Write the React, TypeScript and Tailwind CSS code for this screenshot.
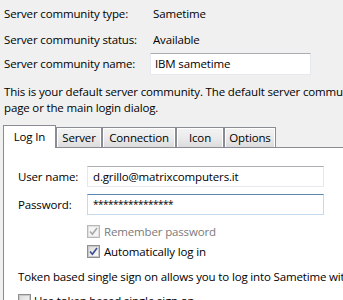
function Checkbox({ checked, disabled }: { checked?: boolean; disabled?: boolean }) {
  return (
    <div
      className={`flex h-[13px] w-[13px] shrink-0 items-center justify-center border ${
        disabled ? "border-[#b8b8b8]" : "border-[#8e8f8f]"
      } bg-white`}
    >
      <div
        className={`flex h-[11px] w-[11px] items-center justify-center border ${
          disabled ? "border-[#e0e0e0] bg-[#f4f4f4]" : "border-[#c8c8c8] bg-gradient-to-br from-[#dcdcdc] to-[#fbfbfb]"
        }`}
      >
        {checked && (
          <svg width="9" height="9" viewBox="0 0 9 9">
            <path
              d="M1 4.5 L3.4 7.2 L8 1"
              fill="none"
              stroke={disabled ? "#a8a8a8" : "#3c4f91"}
              strokeWidth="1.7"
            />
          </svg>
        )}
      </div>
    </div>
  );
}

function Tab({ label, width, active }: { label: string; width: number; active?: boolean }) {
  if (active) {
    return (
      <div
        className="-mb-px flex h-[23px] items-start justify-center border border-b-0 border-[#898c95] bg-white pt-[2px]"
        style={{ width }}
      >
        {label}
      </div>
    );
  }
  return (
    <div
      className="flex h-[20px] items-center justify-center border border-b-0 border-[#898c95] bg-gradient-to-b from-[#f3f3f3] via-[#ebebeb] to-[#dcdcdc] shadow-[inset_1px_1px_0_#fff,inset_-1px_0_0_#fff]"
      style={{ width }}
    >
      {label}
    </div>
  );
}

export default function App() {
  return (
    <div className="h-[300px] w-[343px] overflow-hidden bg-[#f0f0f0] font-['Open_Sans',sans-serif] text-[11.5px] tracking-[-0.15px] text-black">
      <div className="pl-[4px] pt-[1px]">
        <div className="flex h-[26px] items-center">
          <span className="w-[146px]">Server community type:</span>
          <span className="pl-[3px]">Sametime</span>
        </div>
        <div className="flex h-[26px] items-center">
          <span className="w-[146px]">Server community status:</span>
          <span className="pl-[3px]">Available</span>
        </div>
        <div className="flex h-[22px] items-center">
          <span className="w-[146px]">Server community name:</span>
          <div className="flex h-[22px] w-[161px] items-center border border-[#e3e9ef] border-t-[#abadb3] bg-white pl-[4px]">
            IBM sametime
          </div>
        </div>
      </div>

      <div className="mt-[9px] whitespace-nowrap pl-[4px] leading-[16px]">
        <div>This is your default server community. The default server community is shown on the login</div>
        <div>page or the main login dialog.</div>
      </div>

      <div className="mt-[9px] w-[600px]">
        <div className="relative z-10 flex h-[22px] items-end pl-[3px]">
          <Tab label="Log In" width={53} active />
          <Tab label="Server" width={46} />
          <Tab label="Connection" width={74} />
          <Tab label="Icon" width={48} />
          <Tab label="Options" width={52} />
        </div>
        <div className="ml-[3px] h-[200px] border-l border-t border-[#898c95] bg-white pl-[14px] pt-[18px]">
          <div className="flex h-[21px] items-center">
            <span className="w-[69px]">User name:</span>
            <div className="flex h-[21px] w-[237px] items-center border border-[#e3e9ef] border-t-[#abadb3] pl-[5px]">
              d.grillo@matrixcomputers.it
            </div>
          </div>
          <div className="mt-[7px] flex h-[21px] items-center">
            <span className="w-[69px]">Password:</span>
            <div className="flex h-[21px] w-[237px] items-center border border-[#c5daed] border-t-[#5b87b0] pl-[5px] text-[10px] tracking-[-0.5px]">
              ****************
            </div>
          </div>
          <div className="mt-[8px] flex h-[17px] items-center pl-[69px]">
            <Checkbox checked disabled />
            <span className="pl-[4px] text-[#7a7a7a]">Remember password</span>
          </div>
          <div className="mt-[3px] flex h-[17px] items-center pl-[69px]">
            <Checkbox checked />
            <span className="pl-[4px]">Automatically log in</span>
          </div>
          <div className="mt-[9px] whitespace-nowrap leading-[16px]">
            Token based single sign on allows you to log into Sametime without entering a password.
          </div>
          <div className="mt-[7px] flex h-[17px] items-center">
            <Checkbox />
            <span className="pl-[3px]">Use token based single sign on</span>
          </div>
        </div>
      </div>
    </div>
  );
}
